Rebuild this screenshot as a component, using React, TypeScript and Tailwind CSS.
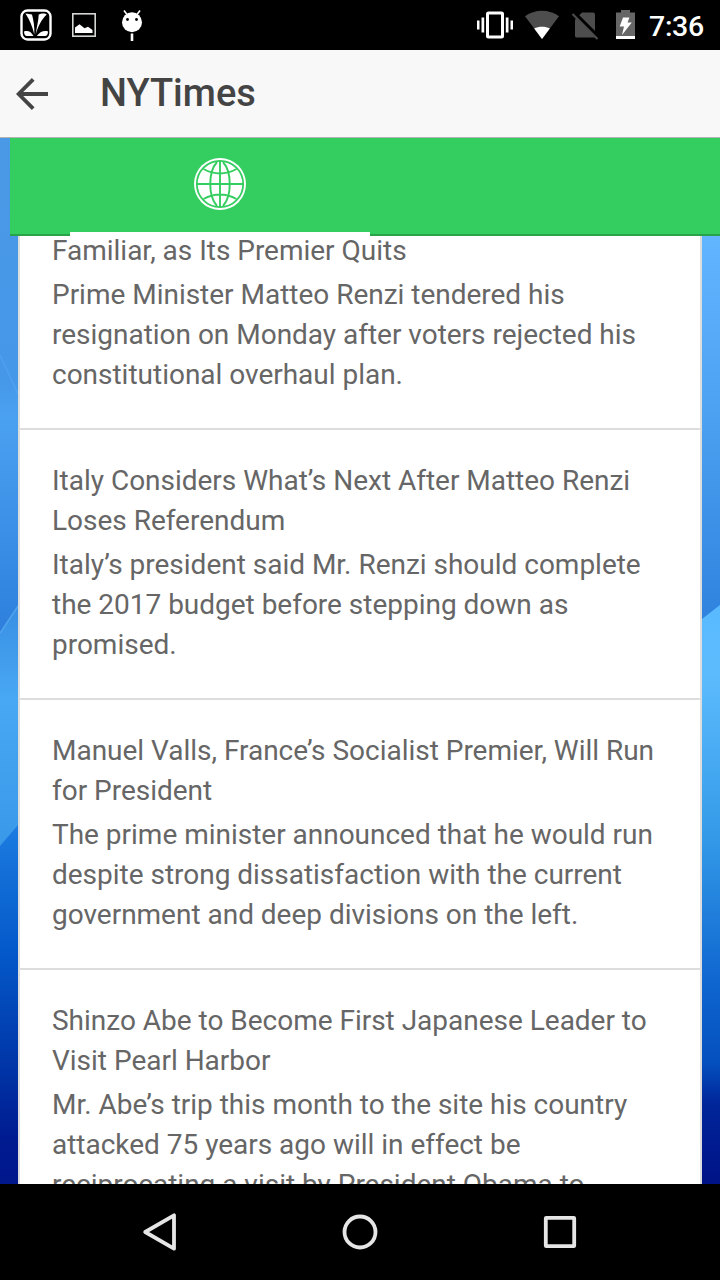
const stories = [
  {
    title: ["Familiar, as Its Premier Quits"],
    body: ["Prime Minister Matteo Renzi tendered his", "resignation on Monday after voters rejected his", "constitutional overhaul plan."],
  },
  {
    title: ["Italy Considers What’s Next After Matteo Renzi", "Loses Referendum"],
    body: ["Italy’s president said Mr. Renzi should complete", "the 2017 budget before stepping down as", "promised."],
  },
  {
    title: ["Manuel Valls, France’s Socialist Premier, Will Run", "for President"],
    body: ["The prime minister announced that he would run", "despite strong dissatisfaction with the current", "government and deep divisions on the left."],
  },
  {
    title: ["Shinzo Abe to Become First Japanese Leader to", "Visit Pearl Harbor"],
    body: ["Mr. Abe’s trip this month to the site his country", "attacked 75 years ago will in effect be", "reciprocating a visit by President Obama to"],
  },
];

function StatusBar() {
  return (
    <header className="flex h-[50px] shrink-0 items-center bg-black">
      <svg className="h-[50px] w-[160px]" viewBox="0 0 160 50" fill="#fff">
        <rect x="21.5" y="10.5" width="29" height="29" rx="6" fill="none" stroke="#fff" strokeWidth="2.4" />
        <path d="M25.5 13.5L32 14.5C33.5 20 34.7 27 34.3 34.5C32.6 27 29.8 20 25.5 13.5Z" />
        <path d="M38.7 14.5C41 13 45.5 13 46.8 14.5C41.8 19 37.5 27 35.6 35.2C36.4 28 38.6 21 38.7 14.5Z" />
        <path d="M24 31.5C28 30 31.5 32 33.5 36H27C25 36 24 34 24 31.5ZM48 31.5C44 30 39.5 32 36.8 36H45C47 36 48 34 48 31.5Z" />
        <rect x="72.8" y="13.8" width="22.4" height="22.4" fill="none" stroke="#d4d7d4" strokeWidth="1.6" />
        <path d="M75 33V27.5L79.5 24.3L84.5 28.3L88 26.8L92.5 30V33Z" />
        <path d="M124 10.5L127 14.5M140 10.5L137 14.5" stroke="#fff" strokeWidth="1.6" />
        <circle cx="132" cy="22.3" r="10" />
        <circle cx="127.5" cy="19.5" r="1.4" fill="#000" />
        <circle cx="136.5" cy="19.5" r="1.4" fill="#000" />
        <rect x="130.7" y="33.5" width="2.6" height="7.5" />
      </svg>
      <svg className="ml-[305px] h-[50px] w-[184px]" viewBox="465 0 184 50" fill="#fff">
        <rect x="487.5" y="13" width="15" height="24" rx="1" fill="none" stroke="#fff" strokeWidth="3" />
        <path d="M477 20.5h2.5v9H477zM481.5 17.5h2.7v15h-2.7zM505.8 17.5h2.7v15h-2.7zM510.5 20.5h2.5v9h-2.5z" />
        <path d="M525 16.2C535 8.8 549 8.8 559 16.2L542 39Z" fill="#4d4d4d" />
        <path d="M534.2 28.6C538.5 26 545.5 26 549.8 28.6L542 39Z" />
        <path d="M582 12.5H593Q595 12.5 595 14.5V37.5H577Q575 37.5 575 36V19.5Z" fill="#4d4d4d" />
        <path d="M574 13L600 39" stroke="#000" strokeWidth="4.5" />
        <path d="M572.5 14L597.5 39" stroke="#4d4d4d" strokeWidth="2.2" />
        <path d="M621 10H630V12.5H635V36H616V12.5H621Z" fill="#666" />
        <rect x="616" y="36" width="19" height="3" />
        <path d="M623 17.5H629.5L627.5 22.5H631.8L622 35L624 26.5H619.7Z" />
      </svg>
      <span className="mt-[4px] text-[28.5px] leading-[34px] font-medium tracking-[-0.3px] text-white">7:36</span>
    </header>
  );
}

function Wallpaper() {
  return (
    <svg className="absolute inset-0 h-full w-full" viewBox="0 138 720 1046" preserveAspectRatio="none">
      <defs>
        <linearGradient id="leftSky" gradientUnits="userSpaceOnUse" x1="0" y1="138" x2="0" y2="634">
          <stop offset="0" stopColor="#4a99e6" />
          <stop offset=".48" stopColor="#4597e8" />
          <stop offset=".56" stopColor="#4ba1f1" />
          <stop offset=".8" stopColor="#3b8fe6" />
          <stop offset="1" stopColor="#2d7fdc" />
        </linearGradient>
        <linearGradient id="leftGlow" x1="0" y1="0" x2="0" y2="1">
          <stop offset="0" stopColor="#398fe3" />
          <stop offset=".38" stopColor="#48a8f4" />
          <stop offset="1" stopColor="#3998e8" />
        </linearGradient>
        <linearGradient id="leftDeep" gradientUnits="userSpaceOnUse" x1="0" y1="826" x2="0" y2="1184">
          <stop offset="0" stopColor="#1c7ce0" />
          <stop offset=".35" stopColor="#0459ca" />
          <stop offset=".7" stopColor="#0032a4" />
          <stop offset=".88" stopColor="#001a90" />
          <stop offset="1" stopColor="#00178b" />
        </linearGradient>
        <linearGradient id="rightSky" gradientUnits="userSpaceOnUse" x1="0" y1="236" x2="0" y2="618">
          <stop offset="0" stopColor="#62b5ff" />
          <stop offset=".45" stopColor="#4da2f2" />
          <stop offset="1" stopColor="#2f83de" />
        </linearGradient>
        <linearGradient id="rightDeep" gradientUnits="userSpaceOnUse" x1="0" y1="606" x2="0" y2="1184">
          <stop offset="0" stopColor="#5abaff" />
          <stop offset=".12" stopColor="#5cbbfd" />
          <stop offset=".4" stopColor="#349ae8" />
          <stop offset=".65" stopColor="#0f66d0" />
          <stop offset=".79" stopColor="#0450bf" />
          <stop offset=".86" stopColor="#00269a" />
          <stop offset="1" stopColor="#001286" />
        </linearGradient>
      </defs>
      <rect y="138" width="360" height="1046" fill="url(#leftSky)" />
      <path d="M0 355L18 394" stroke="#61aff5" strokeWidth="1.5" opacity=".4" />
      <path d="M0 633L18 606V850H0Z" fill="url(#leftGlow)" />
      <path d="M0 633L18 606" stroke="#65b4f5" strokeWidth="1.5" opacity=".6" />
      <path d="M0 846L18 825V1184H0Z" fill="url(#leftDeep)" />
      <rect x="360" y="138" width="360" height="1046" fill="url(#rightSky)" />
      <path d="M702 619L720 605V1184H702Z" fill="url(#rightDeep)" />
    </svg>
  );
}

function GlobeIcon() {
  return (
    <svg className="h-[52px] w-[52px]" viewBox="0 0 52 52" fill="none" stroke="#34cd5f" strokeWidth="1.9">
      <circle cx="26" cy="26" r="26" fill="#fff" stroke="none" />
      <circle cx="26" cy="26" r="23.2" strokeWidth="1.8" />
      <path d="M26 3V49M3 26H49M9.5 11Q26 20 42.5 11M9.5 41Q26 32 42.5 41" />
      <path d="M23 4C14 14 14 38 23 48M29 4C38 14 38 38 29 48" />
    </svg>
  );
}

export default function App() {
  return (
    <div className="flex h-[1280px] w-[720px] flex-col overflow-hidden bg-black font-['Roboto',sans-serif]">
      <StatusBar />
      <div className="flex h-[88px] shrink-0 items-center border-b border-[#b2b2b2] bg-[#f8f8f8] pl-4 text-[#444]">
        <svg className="h-8 w-8" viewBox="0 0 32 32" fill="none" stroke="currentColor" strokeWidth="3.8">
          <path d="M32 16H3M17.2 1.4L2.6 16L17.2 30.6" />
        </svg>
        <h1 className="mb-[2px] ml-[52px] text-[38px] leading-[48px] font-medium">NYTimes</h1>
      </div>
      <main className="relative flex h-[1046px] shrink-0 flex-col overflow-hidden">
        <Wallpaper />
        <nav className="relative z-10 ml-[10px] flex h-[98px] shrink-0 border-b-2 border-[#29a34a] bg-[#34cd5f] pl-[60px]">
          <button className="relative flex w-[300px] items-center justify-center pb-1" aria-label="World">
            <GlobeIcon />
            <span className="absolute -bottom-[2px] left-0 h-[4px] w-full bg-white" />
          </button>
        </nav>
        <section className="relative mx-[18px] min-h-0 flex-1 overflow-hidden border-x-2 border-[#ddd] bg-white text-[28px] leading-[40px] tracking-[-0.015px] text-[#666]">
          <div className="-mt-[36px]">
            {stories.map((story) => (
              <article key={story.title[0]} className="border-b-2 border-[#ddd] px-8 pt-[31px] pb-[33px] whitespace-nowrap">
                <h2>{story.title.map((line) => <span key={line} className="block">{line}</span>)}</h2>
                <p className="mt-1">{story.body.map((line) => <span key={line} className="block">{line}</span>)}</p>
              </article>
            ))}
          </div>
        </section>
      </main>
      <footer className="flex h-24 shrink-0 items-center bg-black">
        <svg className="h-24 w-[720px]" viewBox="0 1184 720 96" fill="none" stroke="#e6e6e6" strokeWidth="3.8" strokeLinejoin="round">
          <path d="M145.2 1232L174 1215.3V1248.7Z" />
          <circle cx="360" cy="1232" r="15.5" />
          <rect x="545.8" y="1217.8" width="28.4" height="28.4" rx="0.5" />
        </svg>
      </footer>
    </div>
  );
}
